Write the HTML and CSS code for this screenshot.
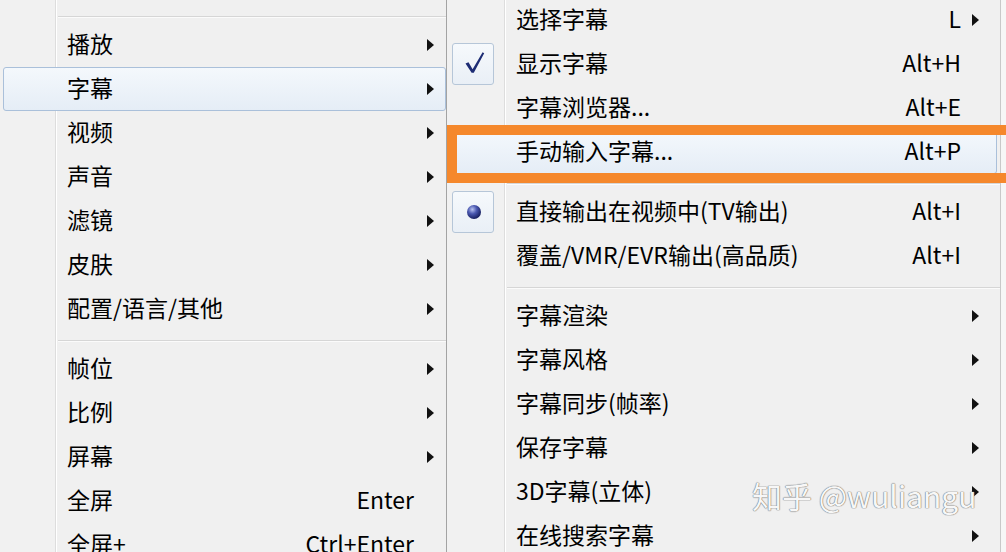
FILE: index.html
```html
<!DOCTYPE html>
<html lang="zh-CN">
<head>
<meta charset="utf-8">
<title>菜单</title>
<link rel="stylesheet" href="styles.css">
</head>
<body>
<div class="screen">
  <div class="menu menu-left">
    <div class="sep"><span class="line"></span></div>
    <div class="item"><span class="label">播放</span><span class="key"></span><span class="arrow"><i class="tri"></i></span></div>
    <div class="item hot"><span class="label">字幕</span><span class="key"></span><span class="arrow"><i class="tri"></i></span></div>
    <div class="item"><span class="label">视频</span><span class="key"></span><span class="arrow"><i class="tri"></i></span></div>
    <div class="item"><span class="label">声音</span><span class="key"></span><span class="arrow"><i class="tri"></i></span></div>
    <div class="item"><span class="label">滤镜</span><span class="key"></span><span class="arrow"><i class="tri"></i></span></div>
    <div class="item"><span class="label">皮肤</span><span class="key"></span><span class="arrow"><i class="tri"></i></span></div>
    <div class="item"><span class="label">配置/语言/其他</span><span class="key"></span><span class="arrow"><i class="tri"></i></span></div>
    <div class="sep"><span class="line"></span></div>
    <div class="item"><span class="label">帧位</span><span class="key"></span><span class="arrow"><i class="tri"></i></span></div>
    <div class="item"><span class="label">比例</span><span class="key"></span><span class="arrow"><i class="tri"></i></span></div>
    <div class="item"><span class="label">屏幕</span><span class="key"></span><span class="arrow"><i class="tri"></i></span></div>
    <div class="item"><span class="label">全屏</span><span class="key">Enter</span><span class="arrow"></span></div>
    <div class="item"><span class="label">全屏+</span><span class="key">Ctrl+Enter</span><span class="arrow"></span></div>
  </div>

  <div class="menu menu-right">
    <div class="item"><span class="icon"></span><span class="label">选择字幕</span><span class="key">L</span><span class="arrow"><i class="tri"></i></span></div>
    <div class="item"><span class="icon boxed">
      <svg width="40" height="40" viewBox="0 0 40 40"><path d="M12.5 19.5 L15.5 18.2 L19.6 25.2 L29.6 8.2 L31.2 9.2 L20.8 28.8 L18.6 28.8 Z" fill="#1d2c74"/></svg>
    </span><span class="label">显示字幕</span><span class="key">Alt+H</span><span class="arrow"></span></div>
    <div class="item"><span class="icon"></span><span class="label">字幕浏览器...</span><span class="key">Alt+E</span><span class="arrow"></span></div>
    <div class="item hot"><span class="icon"></span><span class="label">手动输入字幕...</span><span class="key">Alt+P</span><span class="arrow"></span></div>
    <div class="sep"><span class="line"></span></div>
    <div class="item"><span class="icon boxed">
      <svg width="40" height="40" viewBox="0 0 40 40"><defs><radialGradient id="dot" cx="0.38" cy="0.32" r="0.7"><stop offset="0" stop-color="#b8c2f0"/><stop offset="0.45" stop-color="#4a58b0"/><stop offset="1" stop-color="#141c5c"/></radialGradient></defs><circle cx="21" cy="20" r="7" fill="url(#dot)"/></svg>
    </span><span class="label">直接输出在视频中(TV输出)</span><span class="key">Alt+I</span><span class="arrow"></span></div>
    <div class="item"><span class="icon"></span><span class="label">覆盖/VMR/EVR输出(高品质)</span><span class="key">Alt+I</span><span class="arrow"></span></div>
    <div class="sep"><span class="line"></span></div>
    <div class="item"><span class="icon"></span><span class="label">字幕渲染</span><span class="key"></span><span class="arrow"><i class="tri"></i></span></div>
    <div class="item"><span class="icon"></span><span class="label">字幕风格</span><span class="key"></span><span class="arrow"><i class="tri"></i></span></div>
    <div class="item"><span class="icon"></span><span class="label">字幕同步(帧率)</span><span class="key"></span><span class="arrow"><i class="tri"></i></span></div>
    <div class="item"><span class="icon"></span><span class="label">保存字幕</span><span class="key"></span><span class="arrow"><i class="tri"></i></span></div>
    <div class="item"><span class="icon"></span><span class="label">3D字幕(立体)</span><span class="key"></span><span class="arrow"><i class="tri"></i></span></div>
    <div class="item"><span class="icon"></span><span class="label">在线搜索字幕</span><span class="key"></span><span class="arrow"><i class="tri"></i></span></div>
  </div>
  <div class="edge"></div>

  <div class="mark"></div>
  <div class="watermark">知乎 @wuliangu</div>
</div>
</body>
</html>
```

FILE: styles.css
```css
html, body {
  margin: 0;
  padding: 0;
}
body {
  width: 1006px;
  height: 552px;
  overflow: hidden;
  background: #f0f0f0;
  font-family: "Noto Sans CJK SC", "Noto Sans", sans-serif;
  color: #000;
}
.screen {
  position: relative;
  display: flex;
  width: 1006px;
  height: 552px;
  overflow: hidden;
}
.menu {
  flex: none;
  display: flex;
  flex-direction: column;
  box-sizing: border-box;
}
.menu-left {
  width: 447px;
  padding-top: 7px;
  border-right: 1px solid #a3a3a3;
  background: linear-gradient(to right, #f1f1f1 0, #f1f1f1 55px, #dddddd 55px, #dddddd 56px, #ffffff 56px, #ffffff 57px, #f0f0f0 57px);
}
.menu-right {
  width: 554px;
  margin-top: -2px;
  border-right: 1px solid #c8c8c8;
  background: linear-gradient(to right, #f1f1f1 0, #f1f1f1 57px, #dddddd 57px, #dddddd 58px, #ffffff 58px, #ffffff 59px, #f0f0f0 59px);
}
.edge {
  flex: 1;
  background: #f6f6f6;
}
.item {
  flex: none;
  height: 44px;
  box-sizing: border-box;
  display: flex;
  align-items: center;
  font-size: 23px;
  line-height: 1;
  white-space: nowrap;
}
.label, .key {
  position: relative;
  top: -2px;
}
.menu-left .item {
  padding-left: 67px;
  padding-right: 12px;
}
.menu-left .item.hot {
  margin-left: 3px;
  padding-left: 63px;
  padding-right: 11px;
  border: 1px solid #aac0da;
  border-radius: 3px;
  background: linear-gradient(#f4f8fc, #e5edf6);
}
.menu-right .item {
  padding-left: 5px;
  padding-right: 21px;
}
.menu-right .item.hot {
  margin-left: 3px;
  margin-right: 3px;
  padding-left: 1px;
  padding-right: 17px;
  border: 1px solid #aac0da;
  border-radius: 3px;
  background: linear-gradient(#f4f8fc, #e5edf6);
}
.label {
  flex: 1;
}
.key {
  flex: none;
}
.menu-left .arrow {
  flex: none;
  width: 20px;
  display: flex;
  justify-content: flex-end;
}
.menu-right .arrow {
  flex: none;
  width: 18px;
  display: flex;
  justify-content: flex-end;
}
.tri {
  display: block;
  width: 0;
  height: 0;
  border-left: 7px solid #111;
  border-top: 6px solid transparent;
  border-bottom: 6px solid transparent;
}
.icon {
  flex: none;
  width: 42px;
  height: 42px;
  margin-right: 22px;
  box-sizing: border-box;
  display: flex;
  align-items: center;
  justify-content: center;
}
.icon.boxed {
  border: 1px solid #b6c6d8;
  border-radius: 3px;
  background: linear-gradient(#f6f9fc, #e9eff6);
}
.sep {
  flex: none;
  height: 16px;
  box-sizing: border-box;
  padding-top: 9px;
}
.menu-left .sep {
  padding-left: 58px;
}
.menu-right .sep {
  padding-left: 60px;
}
.sep .line {
  display: block;
  height: 1px;
  background: #d6d6d6;
  border-bottom: 1px solid #fbfbfb;
}
.mark {
  position: absolute;
  left: 447px;
  top: 125px;
  width: 600px;
  height: 58px;
  box-sizing: border-box;
  border: 10px solid #f5882c;
}
.watermark {
  position: absolute;
  left: 752px;
  top: 477px;
  font-family: "Noto Sans CJK SC", "Noto Sans", sans-serif;
  font-size: 30px;
  line-height: 36px;
  font-weight: 400;
  color: #f7f7f7;
  text-shadow: 0 0 1px #7a7a7a, 0 0 1px #7a7a7a, 0 0 1px #8a8a8a;
  white-space: nowrap;
}
```
